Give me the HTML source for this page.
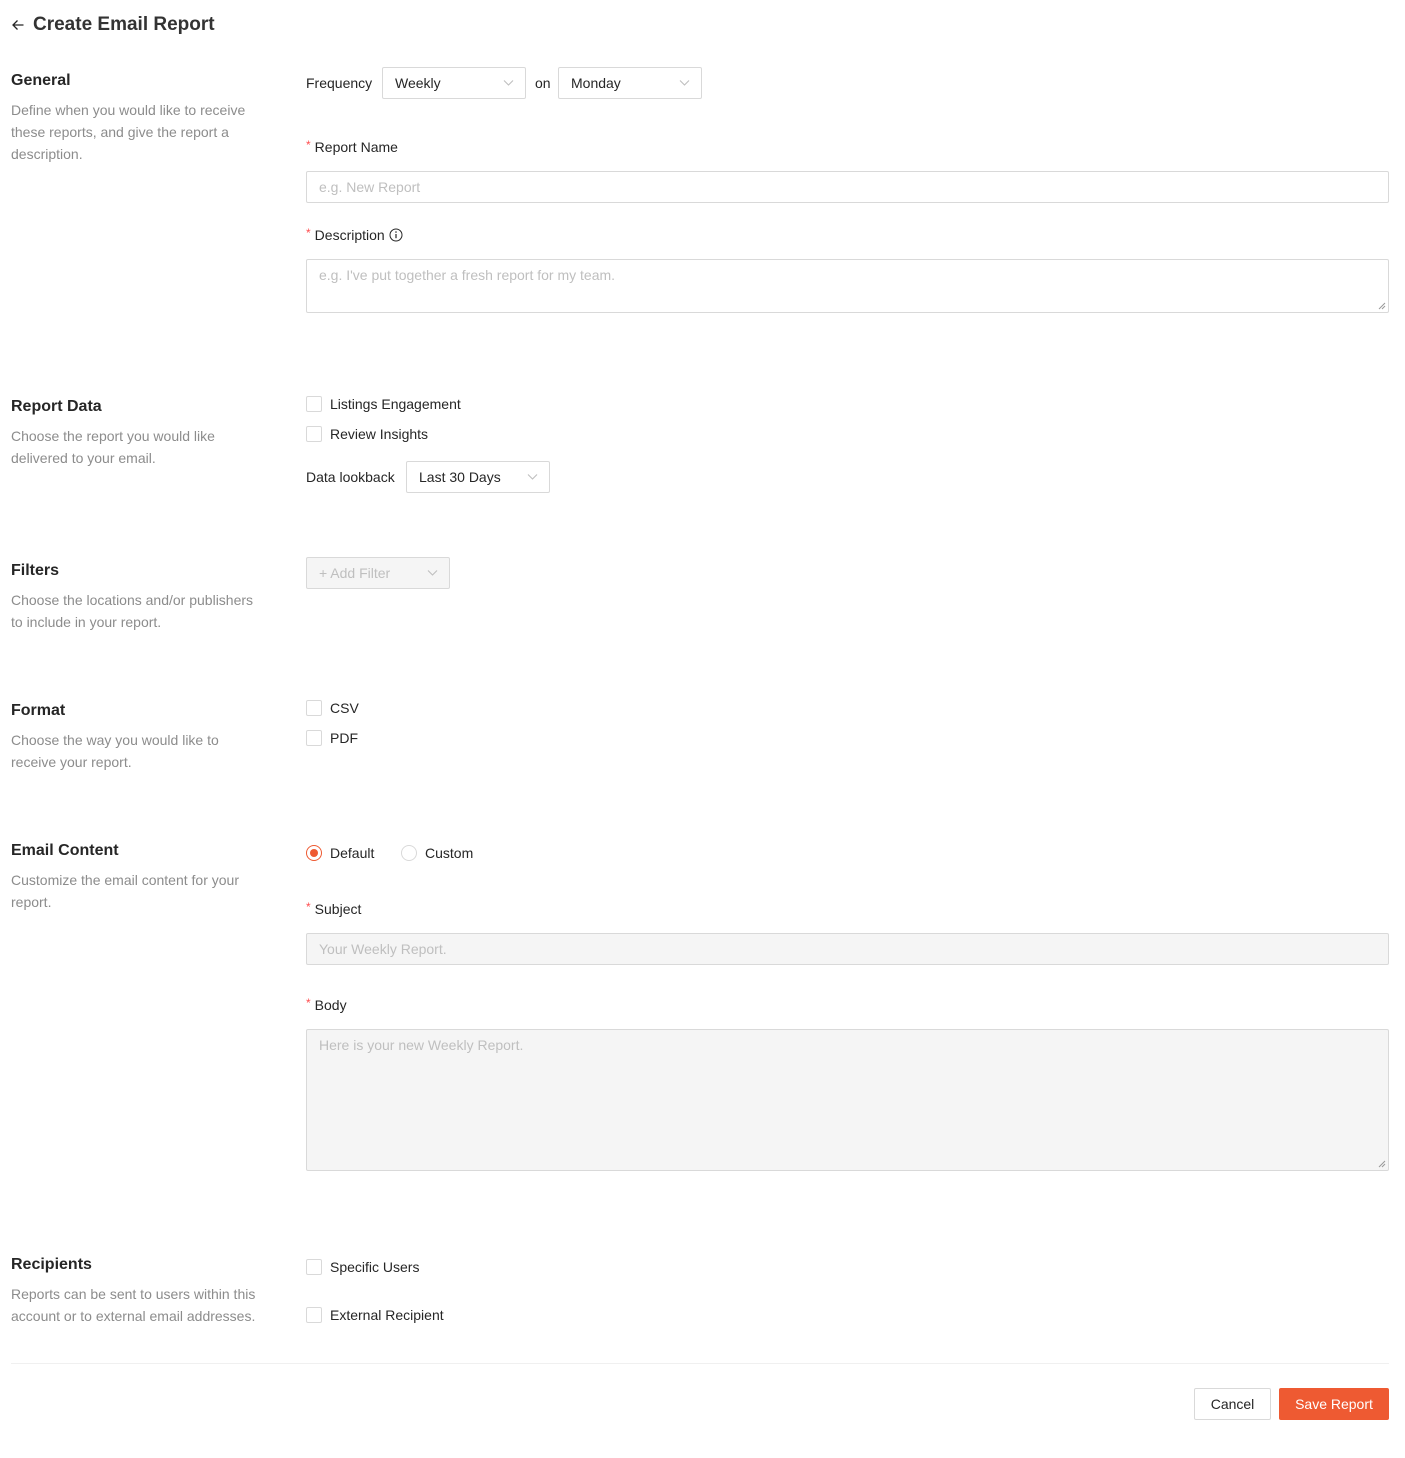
<!DOCTYPE html>
<html><head><meta charset="utf-8"><style>
*{box-sizing:border-box;margin:0;padding:0}
body{width:1405px;height:1458px;background:#fff;font-family:"Liberation Sans",sans-serif;color:#262626;position:relative;overflow:hidden}
.a{position:absolute;font-size:14px;line-height:22px;white-space:nowrap}
.h{font-size:16px;font-weight:bold;color:#262626}
.d{color:#8c8c8c;font-size:14px;line-height:22px}
.box{position:absolute;border:1px solid #d9d9d9;border-radius:2px;background:#fff}
.sel{height:32px;font-size:14px;line-height:30px;padding-left:12px}
.chev{position:absolute;right:11px;top:11px}
.ph{color:#bfbfbf;font-size:14px;padding-left:12px;line-height:30px}
.cb{position:absolute;width:16px;height:16px;border:1px solid #d9d9d9;border-radius:2px;background:#fff}
.req{color:#ff4d4f;font-size:12px;margin-right:4px;vertical-align:top;position:relative;top:-2px}
.grip{position:absolute;right:2px;bottom:2px}
</style></head><body>

<svg style="position:absolute;left:11px;top:18px" width="14" height="14" viewBox="0 0 14 14"><path d="M12.5 7H2M6.5 2.5L2 7l4.5 4.5" fill="none" stroke="#262626" stroke-width="1.3"/></svg>
<div class="a" style="left:33px;top:11px;font-size:19px;line-height:28px;font-weight:bold;color:#333">Create Email Report</div>

<!-- General -->
<div class="a h" style="left:11px;top:70px">General</div>
<div class="a d" style="left:11px;top:99px;white-space:normal;width:255px">Define when you would like to receive these reports, and give the report a description.</div>

<div class="a" style="left:306px;top:72px">Frequency</div>
<div class="box sel" style="left:382px;top:67px;width:144px">Weekly<svg class="chev" width="11" height="8" viewBox="0 0 11 8"><path d="M1 1.5l4.5 4.5L10 1.5" fill="none" stroke="#bfbfbf" stroke-width="1.1"/></svg></div>
<div class="a" style="left:535px;top:72px">on</div>
<div class="box sel" style="left:558px;top:67px;width:144px">Monday<svg class="chev" width="11" height="8" viewBox="0 0 11 8"><path d="M1 1.5l4.5 4.5L10 1.5" fill="none" stroke="#bfbfbf" stroke-width="1.1"/></svg></div>

<div class="a" style="left:306px;top:136px"><span class="req">*</span>Report Name</div>
<div class="box ph" style="left:306px;top:171px;width:1083px;height:32px">e.g. New Report</div>

<div class="a" style="left:306px;top:224px"><span class="req">*</span>Description <svg style="vertical-align:-2px" width="14" height="14" viewBox="0 0 14 14"><circle cx="7" cy="7" r="6" fill="none" stroke="#262626" stroke-width="1"/><path d="M7 6v4.2" stroke="#262626" stroke-width="1.2"/><circle cx="7" cy="4" r=".8" fill="#262626"/></svg></div>
<div class="box ph" style="left:306px;top:259px;width:1083px;height:54px;line-height:20px;padding-top:5px">e.g. I've put together a fresh report for my team.<svg class="grip" width="8" height="8" viewBox="0 0 8 8"><path d="M7 1L1 7M7 4L4 7" stroke="#999" stroke-width="1"/></svg></div>

<!-- Report Data -->
<div class="a h" style="left:11px;top:396px">Report Data</div>
<div class="a d" style="left:11px;top:425px;white-space:normal;width:255px">Choose the report you would like delivered to your email.</div>
<div class="cb" style="left:306px;top:396px"></div><div class="a" style="left:330px;top:393px">Listings Engagement</div>
<div class="cb" style="left:306px;top:426px"></div><div class="a" style="left:330px;top:423px">Review Insights</div>
<div class="a" style="left:306px;top:466px">Data lookback</div>
<div class="box sel" style="left:406px;top:461px;width:144px">Last 30 Days<svg class="chev" width="11" height="8" viewBox="0 0 11 8"><path d="M1 1.5l4.5 4.5L10 1.5" fill="none" stroke="#bfbfbf" stroke-width="1.1"/></svg></div>

<!-- Filters -->
<div class="a h" style="left:11px;top:560px">Filters</div>
<div class="a d" style="left:11px;top:589px;white-space:normal;width:255px">Choose the locations and/or publishers to include in your report.</div>
<div class="box sel" style="left:306px;top:557px;width:144px;background:#f5f5f5;color:#bfbfbf">+ Add Filter<svg class="chev" width="11" height="8" viewBox="0 0 11 8"><path d="M1 1.5l4.5 4.5L10 1.5" fill="none" stroke="#bfbfbf" stroke-width="1.1"/></svg></div>

<!-- Format -->
<div class="a h" style="left:11px;top:700px">Format</div>
<div class="a d" style="left:11px;top:729px;white-space:normal;width:232px">Choose the way you would like to receive your report.</div>
<div class="cb" style="left:306px;top:700px"></div><div class="a" style="left:330px;top:697px">CSV</div>
<div class="cb" style="left:306px;top:730px"></div><div class="a" style="left:330px;top:727px">PDF</div>

<!-- Email Content -->
<div class="a h" style="left:11px;top:840px">Email Content</div>
<div class="a d" style="left:11px;top:869px;white-space:normal;width:255px">Customize the email content for your report.</div>
<div style="position:absolute;left:306px;top:845px;width:16px;height:16px;border:1px solid #ee5a32;border-radius:50%"><div style="position:absolute;left:3px;top:3px;width:8px;height:8px;border-radius:50%;background:#ee5a32"></div></div>
<div class="a" style="left:330px;top:842px">Default</div>
<div style="position:absolute;left:401px;top:845px;width:16px;height:16px;border:1px solid #d9d9d9;border-radius:50%"></div>
<div class="a" style="left:425px;top:842px">Custom</div>

<div class="a" style="left:306px;top:898px"><span class="req">*</span>Subject</div>
<div class="box ph" style="left:306px;top:933px;width:1083px;height:32px;background:#f5f5f5">Your Weekly Report.</div>
<div class="a" style="left:306px;top:994px"><span class="req">*</span>Body</div>
<div class="box ph" style="left:306px;top:1029px;width:1083px;height:142px;background:#f5f5f5;line-height:20px;padding-top:5px">Here is your new Weekly Report.<svg class="grip" width="8" height="8" viewBox="0 0 8 8"><path d="M7 1L1 7M7 4L4 7" stroke="#999" stroke-width="1"/></svg></div>

<!-- Recipients -->
<div class="a h" style="left:11px;top:1254px">Recipients</div>
<div class="a d" style="left:11px;top:1283px;white-space:normal;width:265px">Reports can be sent to users within this account or to external email addresses.</div>
<div class="cb" style="left:306px;top:1259px"></div><div class="a" style="left:330px;top:1256px">Specific Users</div>
<div class="cb" style="left:306px;top:1307px"></div><div class="a" style="left:330px;top:1304px">External Recipient</div>

<div style="position:absolute;left:11px;top:1363px;width:1378px;height:1px;background:#f0f0f0"></div>

<div class="box" style="left:1194px;top:1388px;width:77px;height:32px;font-size:14px;line-height:30px;text-align:center">Cancel</div>
<div style="position:absolute;left:1279px;top:1388px;width:110px;height:32px;background:#ee5a32;border-radius:2px;color:#fff;font-size:14px;line-height:32px;text-align:center">Save Report</div>
</body></html>
